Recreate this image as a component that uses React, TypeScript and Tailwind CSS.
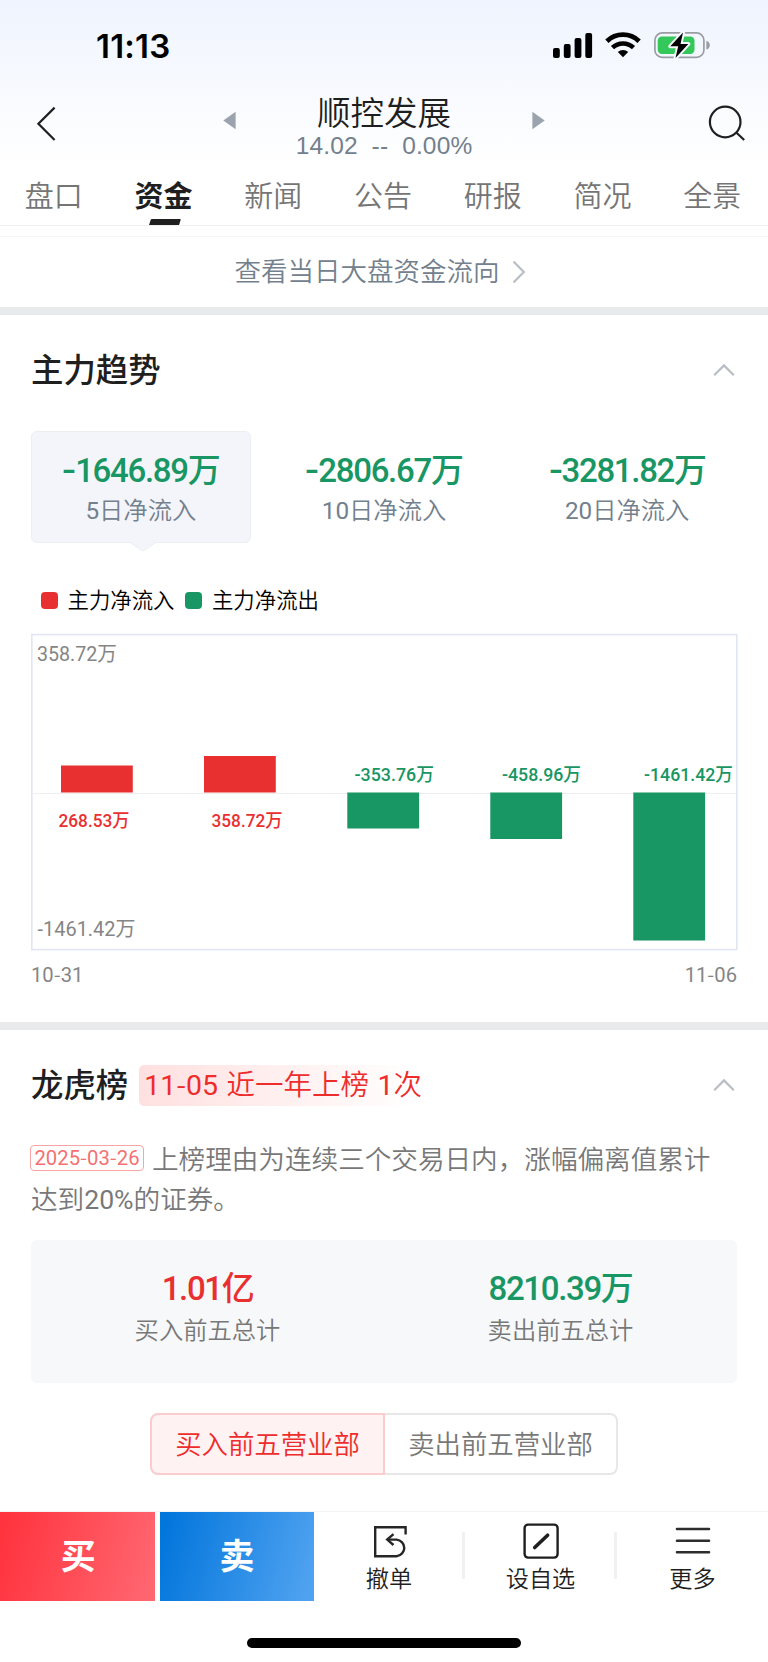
import { useState } from "react";

const tabs = ["盘口", "资金", "新闻", "公告", "研报", "简况", "全景"];

const periods = [
    { value: "-1646.89万", label: "5日净流入" },
    { value: "-2806.67万", label: "10日净流入" },
    { value: "-3281.82万", label: "20日净流入" },
];

const bars = [
    { x: 61, y: 765.5, h: 27, label: "268.53万", labelX: 58.5, labelW: 71 },
    { x: 204, y: 756, h: 36.5, label: "358.72万", labelX: 211.5, labelW: 71 },
    { x: 347.3, y: 792.5, h: 36, label: "-353.76万", labelX: 354.5, labelW: 79.5 },
    { x: 490.3, y: 792.5, h: 46.5, label: "-458.96万", labelX: 502, labelW: 79 },
    { x: 633.3, y: 792.5, h: 148, label: "-1461.42万", labelX: 644, labelW: 89 },
];

// Latin digits look thinner than the hanzi around them, so they go one weight up.
// Roboto's hyphen is also too short, it is set in the CJK face instead.
function Num({ children }: { children: string }) {
    return (
        <>
            {children.split(/([\d.%]+|-)/).map((part, i) => {
                if (part === "-") {
                    return <span key={i} className="font-['Noto_Sans_CJK_SC',sans-serif] leading-[0]">-</span>;
                }
                if (/\d/.test(part)) {
                    return <span key={i} className="font-normal leading-[0]">{part}</span>;
                }
                return part;
            })}
        </>
    );
}

function StatusBar() {
    return (
        <div className="flex h-[90px] items-start justify-between pl-[96px] pr-[58px]">
            <span className="mt-[26px] font-['Inter',sans-serif] text-[33px] font-semibold leading-[40px] tracking-[0.2px] text-black">
                11:13
            </span>
            <svg className="mt-[32px]" width="158" height="27" viewBox="0 0 158 27">
                <rect x="1" y="16" width="6.8" height="10" rx="2" />
                <rect x="11.8" y="12" width="6.8" height="14" rx="2" />
                <rect x="22.6" y="6" width="6.8" height="20" rx="2" />
                <rect x="33.3" y="1" width="6.8" height="25" rx="2" />
                <path d="M71 25.3 L65.8 20 a7.6 7.6 0 0 1 10.4 0 Z" />
                <path d="M60.5 15.7 a15.2 15.2 0 0 1 21 0" fill="none" stroke="#000" strokeWidth="4.6" />
                <path d="M54.9 9.2 a23.2 23.2 0 0 1 32.2 0" fill="none" stroke="#000" strokeWidth="4.8" />
                <rect x="102.9" y="0.9" width="49" height="24.4" rx="7.4" fill="none" stroke="#9a9da3" strokeWidth="1.7" />
                <path d="M154.4 8.8 q3.4 1.3 3.4 4.4 t-3.4 4.4 Z" fill="#9a9da3" />
                <rect x="105.7" y="4.4" width="36.8" height="17.6" rx="4.2" fill="#34c759" />
                <path
                    d="M131 0.5 L118.3 14.3 H126.2 L123.5 26 L136.3 11.9 H128.5 Z"
                    stroke="#f5f8fe"
                    strokeWidth="4"
                    strokeLinejoin="round"
                    paintOrder="stroke"
                />
            </svg>
        </div>
    );
}

function TitleBar() {
    return (
        <div className="flex h-[75px] justify-between pl-[36px] pr-[22px]">
            <button aria-label="返回" className="mt-[15px] h-[38px] w-[22px]">
                <svg width="22" height="38" viewBox="0 0 22 38" fill="none" stroke="#1f1f1f" strokeWidth="2.2">
                    <path d="M18.6 2.6 L2.4 18.8 L18.6 35" />
                </svg>
            </button>
            <div className="ml-[2px] flex w-[323px] items-start justify-between">
                <svg className="mt-[21px]" width="13" height="19" viewBox="0 0 13 19" fill="#9aa3ae">
                    <path d="M12.6 0.8 V18.2 L0.3 9.5 Z" />
                </svg>
                <div className="flex flex-col items-center">
                    <h1 className="mt-[-1px] h-[43px] text-[33.5px] font-[350] leading-[43px] text-[#1f1f1f]">顺控发展</h1>
                    <p className="whitespace-pre font-['Liberation_Sans',sans-serif] text-[24.5px] leading-[28px] tracking-[0.15px] text-[#73808d]">
                        14.02  --  0.00%
                    </p>
                </div>
                <svg className="mt-[21px]" width="13" height="19" viewBox="0 0 13 19" fill="#9aa3ae">
                    <path d="M0.4 0.8 V18.2 L12.7 9.5 Z" />
                </svg>
            </div>
            <button aria-label="搜索" className="mt-[14px] h-[40px] w-[38px]">
                <svg width="38" height="40" viewBox="0 0 38 40" fill="none" stroke="#1f1f1f" strokeWidth="2.2">
                    <circle cx="17.2" cy="18" r="15.3" />
                    <path d="M28 28.3 L36.2 36" />
                </svg>
            </button>
        </div>
    );
}

function TabBar() {
    const [active, setActive] = useState("资金");

    return (
        <div className="h-[61px] overflow-hidden border-b border-[#f0f0f1]">
            <div className="-ml-px mr-px grid h-[60px] grid-cols-7">
                {tabs.map((tab) => (
                    <button
                        key={tab}
                        onClick={() => setActive(tab)}
                        className={`flex flex-col items-center text-[29px] leading-[40px] ${tab === active ? "font-bold text-[#1f1f1f]" : "font-[350] text-[#757575]"}`}
                    >
                        <span className="mt-[9px] h-[45px]">{tab}</span>
                        {tab === active && (
                            <span className="ml-[2px] h-[6px] w-[30px] -skew-x-[18deg] rounded-t-[1px] bg-[#1f1f1f]" />
                        )}
                    </button>
                ))}
            </div>
        </div>
    );
}

function CollapseIcon() {
    return (
        <svg width="22" height="14" viewBox="0 0 22 14" fill="none" stroke="#b9bec5" strokeWidth="2.2">
            <path d="M1.2 12.2 L11 2.4 L20.8 12.2" />
        </svg>
    );
}

function FlowChart() {
    return (
        <svg
            className="block font-['Roboto','Noto_Sans_CJK_SC',sans-serif]"
            width="768"
            height="322"
            viewBox="0 632 768 322"
        >
            <rect x="31.8" y="634.6" width="705" height="315" fill="none" stroke="#e2e5f2" strokeWidth="1.6" />
            <path d="M32.5 793.5 H736" stroke="#efeff1" strokeWidth="1" />
            <g className="text-[20.5px] font-normal" fill="#858585">
                <text x="37" y="661" textLength="80" lengthAdjust="spacingAndGlyphs">358.72万</text>
                <text x="37.5" y="935.5" textLength="98" lengthAdjust="spacingAndGlyphs">-1461.42万</text>
            </g>
            {bars.map((bar) => {
                const up = bar.y < 792;
                const color = up ? "#e93030" : "#189663";
                return (
                    <g key={bar.label} fill={color}>
                        <rect x={bar.x} y={bar.y} width="71.8" height={bar.h} />
                        <text
                            className="text-[18px] font-medium"
                            x={bar.labelX}
                            y={up ? 827 : 781}
                            textLength={bar.labelW}
                            lengthAdjust="spacingAndGlyphs"
                        >
                            {bar.label}
                        </text>
                    </g>
                );
            })}
        </svg>
    );
}

function TrendSection() {
    const [selected, setSelected] = useState(0);

    return (
        <section className="h-[707px]">
            <div className="flex h-[116px] items-center justify-between pl-[31px] pr-[33px]">
                <h2 className="mt-[-11px] text-[32.4px] font-medium leading-[40px] text-[#1f1f1f]">主力趋势</h2>
                <span className="mt-[-7px]">
                    <CollapseIcon />
                </span>
            </div>
            <div className="grid grid-cols-3 gap-x-[23.5px] px-[31px]">
                {periods.map((period, i) => (
                    <button
                        key={period.label}
                        onClick={() => setSelected(i)}
                        className={`relative flex h-[112px] flex-col items-center rounded-[6px] border pt-[18px] ${i === selected ? "border-[#eceef2] bg-[#f4f5fa]" : "border-transparent"}`}
                    >
                        <p className="flex h-[41px] font-['Roboto','Noto_Sans_CJK_SC',sans-serif] text-[33px] font-medium leading-[41px] tracking-[-1.3px] text-[#189663]">
                            <span className="mr-[3px] inline-block origin-left scale-x-125">-</span>
                            {period.value.slice(1)}
                        </p>
                        <p className="font-['Roboto','Noto_Sans_CJK_SC',sans-serif] text-[24.3px] font-[350] leading-[40px] text-[#73808d]">
                            <Num>{period.label}</Num>
                        </p>
                        {i === selected && (
                            <svg className="absolute left-[97px] top-[109px]" width="28" height="11" viewBox="0 0 28 11">
                                <path d="M1 1.5 L14 10 L27 1.5 V0 H1 Z" fill="#f4f5fa" />
                                <path d="M1 1.5 L14 10 L27 1.5" fill="none" stroke="#eceef2" />
                            </svg>
                        )}
                    </button>
                ))}
            </div>
            <div className="flex h-[89px] items-center pl-[41px] pt-[26px] text-[21.4px] font-[350] leading-[30px] text-black">
                <span className="mr-[9.5px] size-[17px] rounded-[4px] bg-[#e93030]" />
                <span className="mt-[-4px]">主力净流入</span>
                <span className="ml-[10.5px] mr-[10px] size-[17px] rounded-[4px] bg-[#189663]" />
                <span className="mt-[-4px]">主力净流出</span>
            </div>
            <FlowChart />
            <div className="flex justify-between pl-[31px] pr-[31px] pt-[8px] font-['Roboto',sans-serif] text-[20.2px] font-[350] leading-[26px] text-[#858585]">
                <span>
                    <Num>10-31</Num>
                </span>
                <span>
                    <Num>11-06</Num>
                </span>
            </div>
        </section>
    );
}

function BillboardSection() {
    const [side, setSide] = useState<"buy" | "sell">("buy");

    return (
        <section className="h-[481px] px-[31px]">
            <div className="flex h-[76px] items-end justify-between">
                <div className="flex items-center">
                    <h2 className="mt-[-5px] text-[32.4px] font-medium leading-[40px] text-[#1f1f1f]">龙虎榜</h2>
                    <span className="ml-[11px] h-[41px] w-[280px] whitespace-nowrap rounded-[5px] bg-gradient-to-r from-[#ffe0e0] to-white pl-[5px] font-['Roboto','Noto_Sans_CJK_SC',sans-serif] text-[28.5px] font-[350] leading-[42px] [word-spacing:1.5px] text-[#ee2c2c]">
                        <Num>11-05 近一年上榜 1次</Num>
                    </span>
                </div>
                <span className="mb-[14px] mr-[2px]">
                    <CollapseIcon />
                </span>
            </div>
            <p className="mt-[34px] h-[100px] font-['Roboto','Noto_Sans_CJK_SC',sans-serif] text-[26.6px] font-[350] leading-[40px] text-[#787878]">
                <span className="relative top-[-4px] -ml-px mr-[8px] inline-block h-[26px] w-[114px] rounded-[4px] border border-[#f9a3a3] text-center align-middle text-[20.3px] leading-[25px] text-[#f57070]">
                    <Num>2025-03-26</Num>
                </span>
                上榜理由为连续三个交易日内，涨幅偏离值累计
                <br />
                <Num>达到20%的证券。</Num>
            </p>
            <div className="grid h-[143px] grid-cols-2 rounded-[6px] bg-[#f7f8fa] pt-[28px] text-center">
                <div>
                    <p className="font-['Roboto','Noto_Sans_CJK_SC',sans-serif] text-[33px] font-medium leading-[42px] tracking-[-1.35px] text-[#e93030]">
                        1.01亿
                    </p>
                    <p className="text-[24.3px] font-[350] leading-[38px] text-[#787878]">买入前五总计</p>
                </div>
                <div>
                    <p className="font-['Roboto','Noto_Sans_CJK_SC',sans-serif] text-[33px] font-medium leading-[42px] tracking-[-1.35px] text-[#189663]">
                        8210.39万
                    </p>
                    <p className="text-[24.3px] font-[350] leading-[38px] text-[#787878]">卖出前五总计</p>
                </div>
            </div>
            <div className="mx-auto mt-[30px] flex h-[62px] w-[468px] text-[26.4px] leading-[40px]">
                <button
                    onClick={() => setSide("buy")}
                    className={`w-[235px] rounded-l-[8px] border-2 pb-[3px] font-[350] ${side === "buy" ? "border-[#fbcccd] bg-[#fff2f2] text-[#ee2c2c]" : "border-[#e7e7e7] text-[#787878]"}`}
                >
                    买入前五营业部
                </button>
                <button
                    onClick={() => setSide("sell")}
                    className={`w-[233px] rounded-r-[8px] border-2 border-l-0 pb-[3px] font-[350] ${side === "sell" ? "border-[#fbcccd] bg-[#fff2f2] text-[#ee2c2c]" : "border-[#e7e7e7] text-[#787878]"}`}
                >
                    卖出前五营业部
                </button>
            </div>
        </section>
    );
}

function BottomBar() {
    return (
        <footer className="h-[151px] border-t border-[#f3f3f3]">
            <div className="flex h-[89px]">
                <button className="w-[154.5px] bg-[linear-gradient(105deg,#ff343f_5%,#ff6670_95%)] pb-[4px] pl-[2px] text-[35px] font-bold text-white">
                    买
                </button>
                <button className="ml-[5.5px] w-[154px] bg-[linear-gradient(105deg,#0376dc_5%,#4fa2f0_95%)] pb-[4px] text-[35px] font-bold text-white">
                    卖
                </button>
                <div className="flex flex-1 items-start pb-[8px] text-[23.2px] font-[350] leading-[34px] text-[#1f1f1f]">
                    <button className="flex w-[148px] flex-col items-center pt-[10px]">
                        <svg className="ml-[4px]" width="38" height="40" viewBox="0 0 38 40" fill="none" stroke="#262626" strokeWidth="2.4">
                            <path d="M34.6 12.6 V5.2 H4.2 V34.2 H25.5 A9.2 8.4 0 0 0 25.5 17.6 H17" />
                            <path d="M22.5 12.2 L16.2 17.6 L22.5 23" />
                        </svg>
                        <span className="ml-[2px] mt-[-2px]">撤单</span>
                    </button>
                    <span className="mt-[20px] h-[47px] w-[3px] bg-[#f1f1f2]" />
                    <button className="flex w-[149px] flex-col items-center pt-[10px]">
                        <svg className="ml-[2px]" width="38" height="40" viewBox="0 0 38 40" fill="none" stroke="#1f1f1f" strokeWidth="2.4">
                            <rect x="2.6" y="2.6" width="33" height="33" rx="3.5" />
                            <path d="M12.7 25.5 L25.6 13.2" strokeWidth="3.6" strokeLinecap="round" />
                        </svg>
                        <span className="ml-[2px] mt-[-2px]">设自选</span>
                    </button>
                    <span className="mt-[20px] h-[47px] w-[3px] bg-[#f1f1f2]" />
                    <button className="flex flex-1 flex-col items-center pt-[10px]">
                        <svg
                            width="38"
                            height="40"
                            viewBox="0 0 38 40"
                            fill="none"
                            stroke="#2d2d2d"
                            strokeWidth="2.6"
                            strokeLinecap="round"
                        >
                            <path d="M3 7 H35 M3 18.7 H35 M3 30.3 H35" />
                        </svg>
                        <span className="mt-[-2px]">更多</span>
                    </button>
                </div>
            </div>
            <div className="mx-auto mt-[37px] h-[10px] w-[274px] rounded-full bg-black" />
        </footer>
    );
}

export default function App() {
    return (
        <div className="flex h-[1662px] w-[768px] flex-col overflow-hidden bg-white font-['Noto_Sans_CJK_SC',sans-serif]">
            <header className="bg-gradient-to-b from-[#eff4fe] to-white">
                <StatusBar />
                <TitleBar />
            </header>
            <TabBar />
            <div className="h-[11px] border-b border-[#f5f5f6]" />
            <button className="flex h-[70px] items-center justify-center text-[26.5px] font-[350] leading-[40px] text-[#73808d]">
                <span className="mt-[-5px]">查看当日大盘资金流向</span>
                <svg className="ml-[11px] mr-[7px]" width="16" height="24" viewBox="0 0 16 24" fill="none" stroke="#b9bec5" strokeWidth="2.2">
                    <path d="M2.5 1.6 L12.8 12 L2.5 22.4" />
                </svg>
            </button>
            <div className="h-[8px] bg-[#e9eaec]" />
            <TrendSection />
            <div className="h-[8px] bg-[#e9eaec]" />
            <BillboardSection />
            <BottomBar />
        </div>
    );
}
